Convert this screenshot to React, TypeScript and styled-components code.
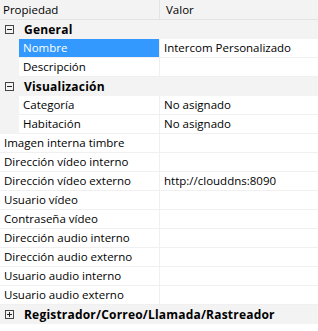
import styled, { createGlobalStyle } from "styled-components";

const GlobalStyle = createGlobalStyle`
html, body {
margin: 0;
padding: 0;
background: #ffffff;
}
body {
font-family: "Open Sans", "Noto Sans", sans-serif;
font-size: 11.5px;
color: #000000;
}
`;

const Grid = styled.div`
width: 318px;
height: 331px;
background: #ffffff;
overflow: hidden;
`;

const Header = styled.div`
display: flex;
height: 19px;
background: #f3f3f3;
border-bottom: 1px solid #e3e3e3;
`;

const HeaderCell = styled.div<{ $width?: number }>`
display: flex;
align-items: center;
flex: ${p => (p.$width ? `0 0 ${p.$width}px` : "1 1 auto")};
padding-left: ${p => (p.$width ? 3 : 6)}px;
box-sizing: border-box;
border-right: ${p => (p.$width ? "1px solid #e3e3e3" : "none")};
line-height: 19px;
`;

const CategoryRow = styled.div`
display: flex;
align-items: center;
height: 18px;
background: #f3f3f3;
border-bottom: 1px solid #f3f3f3;
`;

const Expander = styled.span`
position: relative;
width: 7px;
height: 7px;
margin: 0 10px 0 5px;
border: 1px solid #444444;

&::before, &::after {
content: "";
position: absolute;
background: #222222;
}
&::before {
left: 1px;
right: 1px;
top: 3px;
height: 1px;
}
`;

const Plus = styled(Expander)`
&::after {
top: 1px;
bottom: 1px;
left: 3px;
width: 1px;
}
`;

const CategoryLabel = styled.span`
font-weight: 700;
font-size: 12px;
letter-spacing: 0.2px;
`;

const GroupBody = styled.div`
display: flex;
`;

const Gutter = styled.div`
flex: 0 0 19px;
background: #f3f3f3;
`;

const Rows = styled.div`
flex: 1 1 auto;
display: flex;
flex-direction: column;
`;

const Row = styled.div`
display: flex;
height: 18px;
border-bottom: 1px solid #f0f0f0;
`;

const NameCell = styled.div<{ $width: number; $selected?: boolean }>`
flex: 0 0 ${p => p.$width}px;
box-sizing: border-box;
padding-left: 4px;
line-height: 18px;
white-space: nowrap;
overflow: hidden;
background: ${p => (p.$selected ? "#3399ff" : "transparent")};
color: ${p => (p.$selected ? "#ffffff" : "#000000")};
border-right: 1px solid #f0f0f0;
`;

const ValueCell = styled.div`
flex: 1 1 auto;
padding-left: 4px;
line-height: 18px;
white-space: nowrap;
`;

interface IProp {
    name: string,
    value?: string,
    selected?: boolean,
}

interface IGroup {
    title: string,
    items: IProp[],
}

const groups: IGroup[] = [
    {
        title: "General",
        items: [
            { name: "Nombre", value: "Intercom Personalizado", selected: true },
            { name: "Descripción" },
        ],
    },
    {
        title: "Visualización",
        items: [
            { name: "Categoría", value: "No asignado" },
            { name: "Habitación", value: "No asignado" },
        ],
    },
];

const loose: IProp[] = [
    { name: "Imagen interna timbre" },
    { name: "Dirección vídeo interno" },
    { name: "Dirección vídeo externo", value: "http://clouddns:8090" },
    { name: "Usuario vídeo" },
    { name: "Contraseña vídeo" },
    { name: "Dirección audio interno" },
    { name: "Dirección audio externo" },
    { name: "Usuario audio interno" },
    { name: "Usuario audio externo" },
];

const PropRow = ({ prop, width }: { prop: IProp, width: number }) => (
    <Row>
        <NameCell $width={width} $selected={prop.selected}>{prop.name}</NameCell>
        <ValueCell>{prop.value}</ValueCell>
    </Row>
);

export default function App() {
    return (
        <>
            <GlobalStyle />
            <Grid>
                <Header>
                    <HeaderCell $width={160}>Propiedad</HeaderCell>
                    <HeaderCell>Valor</HeaderCell>
                </Header>
                {groups.map(g => (
                    <div key={g.title}>
                        <CategoryRow>
                            <Expander />
                            <CategoryLabel>{g.title}</CategoryLabel>
                        </CategoryRow>
                        <GroupBody>
                            <Gutter />
                            <Rows>
                                {g.items.map(p => <PropRow key={p.name} prop={p} width={141} />)}
                            </Rows>
                        </GroupBody>
                    </div>
                ))}
                {loose.map(p => <PropRow key={p.name} prop={p} width={160} />)}
                <CategoryRow>
                    <Plus />
                    <CategoryLabel>Registrador/Correo/Llamada/Rastreador</CategoryLabel>
                </CategoryRow>
            </Grid>
        </>
    )
}
